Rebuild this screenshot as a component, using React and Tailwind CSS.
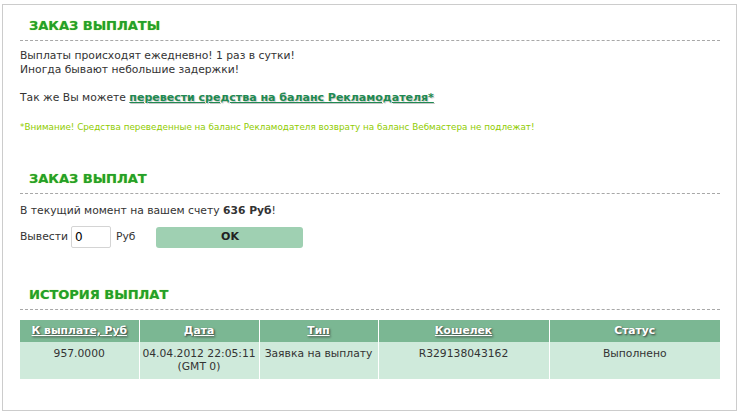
import React, { useState } from 'react';

const Heading = ({ children }) => (
  <div className="border-b border-dashed border-[#a8a8a8] pb-[6px] pl-[9px]">
    <h2 className="text-[13px] font-bold leading-[16px] text-[#23a02a] [text-shadow:0_0_1px_#b8e04a]">{children}</h2>
  </div>
);

const rows = [
  { sum: '957.0000', date: '04.04.2012 22:05:11', tz: '(GMT 0)', type: 'Заявка на выплату', wallet: 'R329138043162', status: 'Выполнено' },
];

const App = () => {
  const [amount, setAmount] = useState('0');

  return (
    <div className="min-h-[414px] bg-white px-[2px] pt-[4px] pb-[3px] font-['DejaVu_Sans',sans-serif] text-[10.75px] text-[#333]">
      <div className="h-[407px] border border-[#cccccc] bg-white pl-[17px] pr-[16px] pt-[13px]">
        <Heading>ЗАКАЗ ВЫПЛАТЫ</Heading>

        <div className="mt-[8px] leading-[14px]">
          <p>Выплаты происходят ежедневно! 1 раз в сутки!</p>
          <p>Иногда бывают небольшие задержки!</p>
          <p className="mt-[14px]">
            Так же Вы можете{' '}
            <a href="#" className="font-bold text-[11px] text-[#1f8a52] underline [text-shadow:1px_1px_1px_#c8c8c8]">
              перевести средства на баланс Рекламодателя*
            </a>
          </p>
          <p className="mt-[15px] text-[8.8px] text-[#8fcc00]">
            *Внимание! Средства переведенные на баланс Рекламодателя возврату на баланс Вебмастера не подлежат!
          </p>
        </div>

        <div className="mt-[37px]">
          <Heading>ЗАКАЗ ВЫПЛАТ</Heading>
        </div>
        <p className="mt-[10px] leading-[14px]">
          В текущий момент на вашем счету <b>636 Руб</b>!
        </p>
        <div className="mt-[8px] flex items-center">
          <span>Вывести</span>
          <input
            value={amount}
            onChange={(e) => setAmount(e.target.value)}
            className="ml-[3px] h-[22px] w-[40px] rounded-[2px] border border-[#d4d4d4] px-[3px] text-[12px] text-black outline-none"
          />
          <span className="ml-[5px]">Руб</span>
          <button className="ml-[21px] h-[21px] w-[147px] rounded-[3px] bg-[#9fd0b2] text-[11px] font-bold text-[#222]">
            OK
          </button>
        </div>

        <div className="mt-[39px]">
          <Heading>ИСТОРИЯ ВЫПЛАТ</Heading>
        </div>
        <table className="mt-[10px] w-[700px] border-collapse text-center">
          <thead>
            <tr className="h-[22px] bg-[#7bb793] font-bold text-white [text-shadow:1px_1px_2px_#333]">
              <th className="w-[119px] border-r border-white"><a href="#" className="underline">К выплате, Руб</a></th>
              <th className="w-[120px] border-r border-white"><a href="#" className="underline">Дата</a></th>
              <th className="w-[119px] border-r border-white"><a href="#" className="underline">Тип</a></th>
              <th className="w-[171px] border-r border-white"><a href="#" className="underline">Кошелек</a></th>
              <th>Статус</th>
            </tr>
          </thead>
          <tbody>
            {rows.map((r) => (
              <tr key={r.wallet} className="h-[37px] bg-[#cfeadb] align-top leading-[13px]">
                <td className="border-r border-white pt-[5px]">{r.sum}</td>
                <td className="border-r border-white pt-[5px]">{r.date}<br />{r.tz}</td>
                <td className="border-r border-white pt-[5px]">{r.type}</td>
                <td className="border-r border-white pt-[5px]">{r.wallet}</td>
                <td className="pt-[5px]">{r.status}</td>
              </tr>
            ))}
          </tbody>
        </table>
      </div>
    </div>
  );
};

export default App;
